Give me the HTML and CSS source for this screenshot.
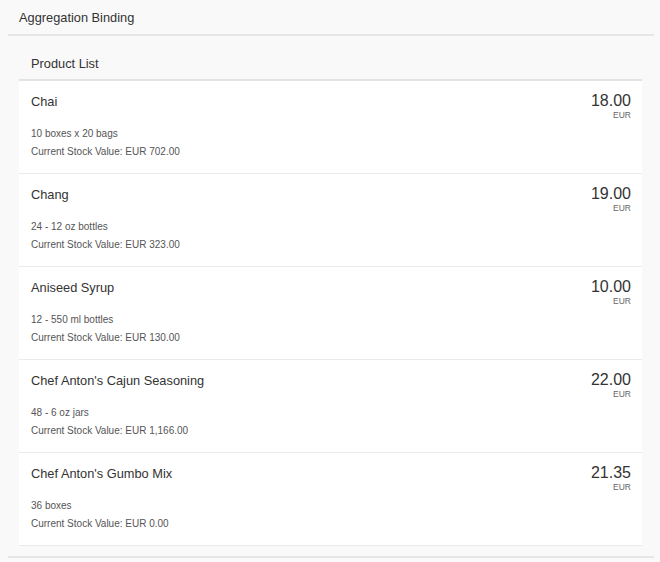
FILE: index.html
```html
<!DOCTYPE html>
<html>
<head>
<meta charset="utf-8">
<title>Aggregation Binding</title>
<link rel="stylesheet" href="styles.css">
</head>
<body>
<div class="page">
  <div class="page-head">Aggregation Binding</div>
  <div class="content">
    <div class="panel">
      <div class="panel-head">Product List</div>
      <ul class="list">
        <li class="item">
          <div class="top">
            <div class="title">Chai</div>
            <div class="price"><div class="num">18.00</div><div class="unit">EUR</div></div>
          </div>
          <div class="attr">10 boxes x 20 bags</div>
          <div class="attr">Current Stock Value: EUR 702.00</div>
        </li>
        <li class="item">
          <div class="top">
            <div class="title">Chang</div>
            <div class="price"><div class="num">19.00</div><div class="unit">EUR</div></div>
          </div>
          <div class="attr">24 - 12 oz bottles</div>
          <div class="attr">Current Stock Value: EUR 323.00</div>
        </li>
        <li class="item">
          <div class="top">
            <div class="title">Aniseed Syrup</div>
            <div class="price"><div class="num">10.00</div><div class="unit">EUR</div></div>
          </div>
          <div class="attr">12 - 550 ml bottles</div>
          <div class="attr">Current Stock Value: EUR 130.00</div>
        </li>
        <li class="item">
          <div class="top">
            <div class="title">Chef Anton's Cajun Seasoning</div>
            <div class="price"><div class="num">22.00</div><div class="unit">EUR</div></div>
          </div>
          <div class="attr">48 - 6 oz jars</div>
          <div class="attr">Current Stock Value: EUR 1,166.00</div>
        </li>
        <li class="item">
          <div class="top">
            <div class="title">Chef Anton's Gumbo Mix</div>
            <div class="price"><div class="num">21.35</div><div class="unit">EUR</div></div>
          </div>
          <div class="attr">36 boxes</div>
          <div class="attr">Current Stock Value: EUR 0.00</div>
        </li>
      </ul>
    </div>
  </div>
</div>
</body>
</html>
```
FILE: styles.css
```css
html, body {
  margin: 0;
  padding: 0;
  background: #f9f9f9;
}
body {
  font-family: "Liberation Sans", Arial, sans-serif;
  color: #333333;
}
.page {
  margin: 0 6px 0 8px;
}
.page-head {
  font-size: 12.8px;
  line-height: 16px;
  padding: 10px 11px 8px 11px;
  border-bottom: 2px solid #e6e6e6;
}
.content {
  padding: 0 12px 10px 11px;
  border-bottom: 2px solid #e6e6e6;
}
.panel-head {
  font-size: 12.8px;
  line-height: 16px;
  padding: 20px 12px 7px 12px;
  border-bottom: 2px solid #e3e3e3;
}
.list {
  list-style: none;
  margin: 0;
  padding: 0;
}
.item {
  background: #ffffff;
  padding: 10px 11px 12px 12px;
  border-bottom: 1px solid #ebebeb;
}
.top {
  display: flex;
  justify-content: space-between;
  align-items: baseline;
}
.title {
  font-size: 12.8px;
  line-height: 16px;
  color: #333333;
}
.price {
  text-align: right;
}
.num {
  font-size: 16px;
  line-height: 19px;
  color: #333333;
}
.unit {
  font-size: 8.5px;
  line-height: 11px;
  color: #666666;
}
.attr {
  font-size: 10px;
  line-height: 18px;
  color: #555555;
}
.top + .attr {
  margin-top: 4px;
}
```
